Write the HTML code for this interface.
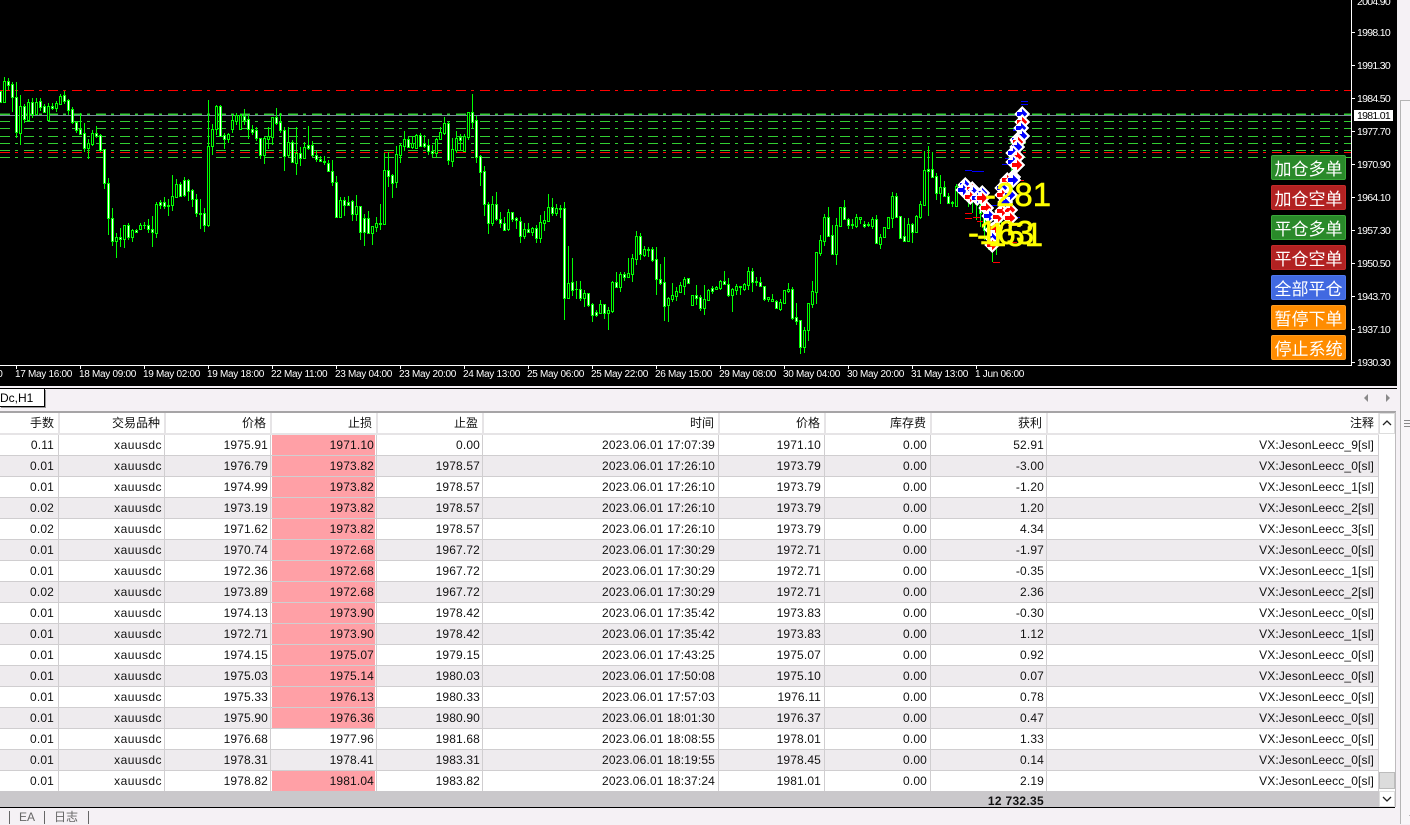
<!DOCTYPE html>
<html><head><meta charset="utf-8"><title>MT4</title>
<style>
*{box-sizing:border-box}
html,body{margin:0;padding:0;background:#f5f1f5;width:1410px;height:824px;overflow:hidden;font-family:"Liberation Sans","Noto Sans CJK SC",sans-serif}
#chart{position:absolute;left:0;top:0;width:1397px;height:386px;background:#000;overflow:hidden}
#chart svg{position:absolute;left:0;top:0}
.p{position:absolute;left:1357px;color:#fff;font-size:10.5px;letter-spacing:-.7px;line-height:12px;height:12px}
.t{position:absolute;top:369px;color:#fff;font-size:10px;letter-spacing:-.3px;line-height:12px;white-space:nowrap}
.cur{position:absolute;left:1354px;top:110px;width:39px;height:11px;background:#fff;color:#000;font-size:10.5px;letter-spacing:-.7px;line-height:13px;padding-left:3px;overflow:hidden}
.y{position:absolute;color:#ff0;font-size:33px;line-height:32px;white-space:nowrap;-webkit-text-stroke:.5px #ff0}
.b{position:absolute;left:1271px;width:75px;height:25px;border-radius:2px;color:#fff;font:17px/24px "WenQuanYi Zen Hei","Noto Sans CJK SC",sans-serif;text-align:center;border:1px solid}
.g{background:#2a8a2a;border-color:#3aa83a}.r{background:#b22222;border-color:#c22a2a}.u{background:#4169e1;border-color:#4f78ee}.o{background:#ff8c00;border-color:#ff9d20}
#tabs{position:absolute;left:0;top:388px;width:1397px;height:24px;background:#f5f1f5;border-top:1px solid #000}
#tab{position:absolute;left:0;top:0;width:45px;height:18px;background:#fff;border-right:1px solid #000;border-bottom:1px solid #000;font-size:12px;line-height:19px;color:#000;box-shadow:1px 1px 0 #999}
#tl{position:absolute;left:0;top:411px;width:1396px;height:2px;background:#a6a4a6}
.row{position:absolute;left:0;width:1379px;height:21px;display:flex;border-bottom:1px solid #d0ced0;background:#fff;font-size:12px;line-height:20px;color:#111;letter-spacing:.15px}
.row.a{background:#eeebee}
.row div{flex:none;text-align:right;padding-right:4px;border-right:1px solid #d0ced0;white-space:nowrap;overflow:hidden}
.row .c2,.row .c3,.row .c4,.row .c5,.row .c9{padding-right:2px}
.row .c6,.row .c7,.row .c8{padding-right:3px}
.row .s{background:linear-gradient(#ffa0a6,#ffa0a6) 1px 0/103px 100% no-repeat}
.row .x{letter-spacing:.45px}
.c1{width:59px}.c2,.c3,.c4,.c5,.c7,.c8{width:106px}.c6{width:236px}.c9{width:116px}.c10{width:332px}
.hd{position:absolute;left:0;top:413px;width:1379px;height:22px;display:flex;background:#fff;border-bottom:2px solid #e6e4e6;font-size:12px;line-height:21px;color:#111}
.hd div{flex:none;text-align:right;padding-right:4px;border-right:2px solid #e6e4e6;position:relative;left:1px}
#tot{position:absolute;left:0;top:791px;width:1379px;height:16px;background:#cac8cb;overflow:hidden;font-size:12px;font-weight:bold;line-height:20px;color:#111;text-align:right;padding-right:335px;letter-spacing:.3px}
#bl{position:absolute;left:0;top:807px;width:1395px;height:1px;background:#000}
.sep{position:absolute;top:811px;width:1px;height:13px;background:#666}
.ft{position:absolute;top:810px;color:#666;font-size:12px;line-height:15px}
#sb{position:absolute;left:1379px;top:413px;width:16px;height:394px;background:#fff}
#sbr{position:absolute;left:1395px;top:412px;width:1px;height:395px;background:#bdbbbd}
#th{position:absolute;left:1379px;top:772px;width:16px;height:17px;background:#dcdcdc;border:1px solid #bcbcbc}
#ub,#db{position:absolute;left:1379px;width:16px;background:#fff;border:1px solid #ddd}
#ub{top:413px;height:21px}#db{top:791px;height:16px}
#right{position:absolute;left:1397px;top:0;width:13px;height:824px;background:#f5f1f5}
#rp{position:absolute;left:3px;top:100px;width:10px;height:724px;border-left:1px solid #b5b5b5;border-top:1px solid #b5b5b5;background:#f8f6f8}
</style></head><body>
<div id="chart">
<svg id="s" width="1397" height="386" viewBox="0 0 1397 386" xmlns="http://www.w3.org/2000/svg">
<defs>
<g id="mb" shape-rendering="crispEdges"><path d="M0-8 8 0 0 8-8 0Z" fill="#fff"/><path d="M-5-2H0V-5L5 0 0 5V2H-5Z" fill="#00f"/></g>
<g id="mr" shape-rendering="crispEdges"><path d="M0-8 8 0 0 8-8 0Z" fill="#fff"/><path d="M-5-2H0V-5L5 0 0 5V2H-5Z" fill="#f00"/></g>
</defs>
<g shape-rendering="crispEdges" stroke-dasharray="10 5 3 6" fill="none">
<path d="M0 90.5H1351M0 152.5H1351" stroke="#f00"/>
<path d="M0 121.5H1351M0 128.5H1351M0 136.5H1351M0 143.5H1351M0 150.5H1351M0 157.5H1351" stroke="#32cd32"/>
<path d="M0 114.5H1351" stroke="#32cd32" stroke-width="2"/>
</g>
<path d="M0 115.5H1351" stroke="#778899" shape-rendering="crispEdges"/>
<g id="cd" shape-rendering="crispEdges"></g>
<g shape-rendering="crispEdges" fill="#00f">
<rect x="1021" y="101" width="7" height="1"/><rect x="1021" y="104" width="7" height="1"/><rect x="1013" y="129" width="6" height="2"/><rect x="1002" y="164" width="6" height="1"/><rect x="1005" y="158" width="5" height="1"/><rect x="965" y="170" width="7" height="1"/><rect x="972" y="171" width="5" height="1"/><rect x="977" y="171" width="7" height="1"/><rect x="989" y="205" width="8" height="1"/><rect x="1014" y="217" width="6" height="1"/>
</g>
<g shape-rendering="crispEdges" fill="#f00">
<rect x="965" y="213" width="7" height="1"/><rect x="965" y="218" width="7" height="1"/><rect x="973" y="217" width="7" height="1"/><rect x="977" y="221" width="6" height="1"/><rect x="1017" y="180" width="7" height="1"/><rect x="993" y="262" width="7" height="1"/><rect x="1008" y="225" width="9" height="1"/><rect x="1008" y="232" width="9" height="1"/><rect x="1008" y="242" width="9" height="1"/>
</g>
<g id="mk"></g>
<path d="M1351.5 0V365.5H0" fill="none" stroke="#fff" shape-rendering="crispEdges"/>
<path d="M1352 32.5h3M1352 65.5h3M1352 98.5h3M1352 131.5h3M1352 164.5h3M1352 197.5h3M1352 230.5h3M1352 263.5h3M1352 296.5h3M1352 329.5h3M1352 362.5h3M16.5 366v3M80.5 366v3M144.5 366v3M208.5 366v3M272.5 366v3M336.5 366v3M400.5 366v3M464.5 366v3M528.5 366v3M592.5 366v3M656.5 366v3M720.5 366v3M784.5 366v3M848.5 366v3M912.5 366v3M976.5 366v3" stroke="#fff" shape-rendering="crispEdges" fill="none"/>
</svg>
<div class="y" style="left:985px;top:179px">-281</div>
<div class="y" style="left:968px;top:217px">-163</div>
<div class="y" style="left:977px;top:219px">-151</div>
<div class="p" style="top:-4px">2004.90</div>
<div class="p" style="top:27px">1998.10</div>
<div class="p" style="top:60px">1991.30</div>
<div class="p" style="top:93px">1984.50</div>
<div class="p" style="top:126px">1977.70</div>
<div class="p" style="top:159px">1970.90</div>
<div class="p" style="top:192px">1964.10</div>
<div class="p" style="top:225px">1957.30</div>
<div class="p" style="top:258px">1950.50</div>
<div class="p" style="top:291px">1943.70</div>
<div class="p" style="top:324px">1937.10</div>
<div class="p" style="top:357px">1930.30</div>
<div class="cur">1981.01</div>
<div class="t" style="left:-8px">00</div>
<div class="t" style="left:15px">17 May 16:00</div>
<div class="t" style="left:79px">18 May 09:00</div>
<div class="t" style="left:143px">19 May 02:00</div>
<div class="t" style="left:207px">19 May 18:00</div>
<div class="t" style="left:271px">22 May 11:00</div>
<div class="t" style="left:335px">23 May 04:00</div>
<div class="t" style="left:399px">23 May 20:00</div>
<div class="t" style="left:463px">24 May 13:00</div>
<div class="t" style="left:527px">25 May 06:00</div>
<div class="t" style="left:591px">25 May 22:00</div>
<div class="t" style="left:655px">26 May 15:00</div>
<div class="t" style="left:719px">29 May 08:00</div>
<div class="t" style="left:783px">30 May 04:00</div>
<div class="t" style="left:847px">30 May 20:00</div>
<div class="t" style="left:911px">31 May 13:00</div>
<div class="t" style="left:975px">1 Jun 06:00</div>
<div class="b g" style="top:155px">加仓多单</div>
<div class="b r" style="top:185px">加仓空单</div>
<div class="b g" style="top:215px">平仓多单</div>
<div class="b r" style="top:245px">平仓空单</div>
<div class="b u" style="top:275px">全部平仓</div>
<div class="b o" style="top:305px">暂停下单</div>
<div class="b o" style="top:335px">停止系统</div>
</div>

<div id="tabs"><div id="tab">Dc,H1</div>
<svg style="position:absolute;left:1360px;top:3px" width="32" height="12"><path d="M8 2v8L4 6ZM26 2v8l4-4Z" fill="#8a8a8a"/></svg></div>
<div id="tl"></div>

<div class="hd"><div class="c1">手数</div><div class="c2">交易品种</div><div class="c3">价格</div><div class="c4">止损</div><div class="c5">止盈</div><div class="c6">时间</div><div class="c7">价格</div><div class="c8">库存费</div><div class="c9">获利</div><div class="c10">注释</div></div>

<div class="row" style="top:435px"><div class="c1">0.11</div><div class="c2 x">xauusdc</div><div class="c3">1975.91</div><div class="c4 s">1971.10</div><div class="c5">0.00</div><div class="c6">2023.06.01 17:07:39</div><div class="c7">1971.10</div><div class="c8">0.00</div><div class="c9">52.91</div><div class="c10">VX:JesonLeecc_9[sl]</div></div>
<div class="row a" style="top:456px"><div class="c1">0.01</div><div class="c2 x">xauusdc</div><div class="c3">1976.79</div><div class="c4 s">1973.82</div><div class="c5">1978.57</div><div class="c6">2023.06.01 17:26:10</div><div class="c7">1973.79</div><div class="c8">0.00</div><div class="c9">-3.00</div><div class="c10">VX:JesonLeecc_0[sl]</div></div>
<div class="row" style="top:477px"><div class="c1">0.01</div><div class="c2 x">xauusdc</div><div class="c3">1974.99</div><div class="c4 s">1973.82</div><div class="c5">1978.57</div><div class="c6">2023.06.01 17:26:10</div><div class="c7">1973.79</div><div class="c8">0.00</div><div class="c9">-1.20</div><div class="c10">VX:JesonLeecc_1[sl]</div></div>
<div class="row a" style="top:498px"><div class="c1">0.02</div><div class="c2 x">xauusdc</div><div class="c3">1973.19</div><div class="c4 s">1973.82</div><div class="c5">1978.57</div><div class="c6">2023.06.01 17:26:10</div><div class="c7">1973.79</div><div class="c8">0.00</div><div class="c9">1.20</div><div class="c10">VX:JesonLeecc_2[sl]</div></div>
<div class="row" style="top:519px"><div class="c1">0.02</div><div class="c2 x">xauusdc</div><div class="c3">1971.62</div><div class="c4 s">1973.82</div><div class="c5">1978.57</div><div class="c6">2023.06.01 17:26:10</div><div class="c7">1973.79</div><div class="c8">0.00</div><div class="c9">4.34</div><div class="c10">VX:JesonLeecc_3[sl]</div></div>
<div class="row a" style="top:540px"><div class="c1">0.01</div><div class="c2 x">xauusdc</div><div class="c3">1970.74</div><div class="c4 s">1972.68</div><div class="c5">1967.72</div><div class="c6">2023.06.01 17:30:29</div><div class="c7">1972.71</div><div class="c8">0.00</div><div class="c9">-1.97</div><div class="c10">VX:JesonLeecc_0[sl]</div></div>
<div class="row" style="top:561px"><div class="c1">0.01</div><div class="c2 x">xauusdc</div><div class="c3">1972.36</div><div class="c4 s">1972.68</div><div class="c5">1967.72</div><div class="c6">2023.06.01 17:30:29</div><div class="c7">1972.71</div><div class="c8">0.00</div><div class="c9">-0.35</div><div class="c10">VX:JesonLeecc_1[sl]</div></div>
<div class="row a" style="top:582px"><div class="c1">0.02</div><div class="c2 x">xauusdc</div><div class="c3">1973.89</div><div class="c4 s">1972.68</div><div class="c5">1967.72</div><div class="c6">2023.06.01 17:30:29</div><div class="c7">1972.71</div><div class="c8">0.00</div><div class="c9">2.36</div><div class="c10">VX:JesonLeecc_2[sl]</div></div>
<div class="row" style="top:603px"><div class="c1">0.01</div><div class="c2 x">xauusdc</div><div class="c3">1974.13</div><div class="c4 s">1973.90</div><div class="c5">1978.42</div><div class="c6">2023.06.01 17:35:42</div><div class="c7">1973.83</div><div class="c8">0.00</div><div class="c9">-0.30</div><div class="c10">VX:JesonLeecc_0[sl]</div></div>
<div class="row a" style="top:624px"><div class="c1">0.01</div><div class="c2 x">xauusdc</div><div class="c3">1972.71</div><div class="c4 s">1973.90</div><div class="c5">1978.42</div><div class="c6">2023.06.01 17:35:42</div><div class="c7">1973.83</div><div class="c8">0.00</div><div class="c9">1.12</div><div class="c10">VX:JesonLeecc_1[sl]</div></div>
<div class="row" style="top:645px"><div class="c1">0.01</div><div class="c2 x">xauusdc</div><div class="c3">1974.15</div><div class="c4 s">1975.07</div><div class="c5">1979.15</div><div class="c6">2023.06.01 17:43:25</div><div class="c7">1975.07</div><div class="c8">0.00</div><div class="c9">0.92</div><div class="c10">VX:JesonLeecc_0[sl]</div></div>
<div class="row a" style="top:666px"><div class="c1">0.01</div><div class="c2 x">xauusdc</div><div class="c3">1975.03</div><div class="c4 s">1975.14</div><div class="c5">1980.03</div><div class="c6">2023.06.01 17:50:08</div><div class="c7">1975.10</div><div class="c8">0.00</div><div class="c9">0.07</div><div class="c10">VX:JesonLeecc_0[sl]</div></div>
<div class="row" style="top:687px"><div class="c1">0.01</div><div class="c2 x">xauusdc</div><div class="c3">1975.33</div><div class="c4 s">1976.13</div><div class="c5">1980.33</div><div class="c6">2023.06.01 17:57:03</div><div class="c7">1976.11</div><div class="c8">0.00</div><div class="c9">0.78</div><div class="c10">VX:JesonLeecc_0[sl]</div></div>
<div class="row a" style="top:708px"><div class="c1">0.01</div><div class="c2 x">xauusdc</div><div class="c3">1975.90</div><div class="c4 s">1976.36</div><div class="c5">1980.90</div><div class="c6">2023.06.01 18:01:30</div><div class="c7">1976.37</div><div class="c8">0.00</div><div class="c9">0.47</div><div class="c10">VX:JesonLeecc_0[sl]</div></div>
<div class="row" style="top:729px"><div class="c1">0.01</div><div class="c2 x">xauusdc</div><div class="c3">1976.68</div><div class="c4">1977.96</div><div class="c5">1981.68</div><div class="c6">2023.06.01 18:08:55</div><div class="c7">1978.01</div><div class="c8">0.00</div><div class="c9">1.33</div><div class="c10">VX:JesonLeecc_0[sl]</div></div>
<div class="row a" style="top:750px"><div class="c1">0.01</div><div class="c2 x">xauusdc</div><div class="c3">1978.31</div><div class="c4">1978.41</div><div class="c5">1983.31</div><div class="c6">2023.06.01 18:19:55</div><div class="c7">1978.45</div><div class="c8">0.00</div><div class="c9">0.14</div><div class="c10">VX:JesonLeecc_0[sl]</div></div>
<div class="row" style="top:771px"><div class="c1">0.01</div><div class="c2 x">xauusdc</div><div class="c3">1978.82</div><div class="c4 s">1981.04</div><div class="c5">1983.82</div><div class="c6">2023.06.01 18:37:24</div><div class="c7">1981.01</div><div class="c8">0.00</div><div class="c9">2.19</div><div class="c10">VX:JesonLeecc_0[sl]</div></div>

<div id="tot">12 732.35</div>
<div id="bl"></div>
<div id="sb"></div><div id="sbr"></div><div id="th"></div>
<div id="ub"><svg width="14" height="19"><path d="M3 11l4-4 4 4" fill="none" stroke="#222" stroke-width="1.3"/></svg></div>
<div id="db"><svg width="14" height="14"><path d="M3 5l4 4 4-4" fill="none" stroke="#222" stroke-width="1.3"/></svg></div>
<div class="sep" style="left:9px"></div><div class="ft" style="left:19px">EA</div><div class="sep" style="left:44px"></div><div class="ft" style="left:54px">日志</div><div class="sep" style="left:88px"></div>
<div id="right"><div id="rp">
<svg width="9" height="720" style="position:absolute;left:3px;top:0"><path d="M0 319.5h9M0 322.5h9M0 325.5h9" stroke="#888" shape-rendering="crispEdges"/><path d="M5 714h6l-3 3Z" fill="#777"/></svg>
</div></div>

<script>
var seg=[[0,70,"w62,62,95,95 g22,34,96,99 w25,34,44,60 w36,42,80,126 w37,82,185,204 g75,108,188,225 w102,108,146,158 g88,97,150,155 w85,97,132,145 g85,95,132,135 w85,94,110,123 w103,108,125,130 g98,108,150,150 w98,108,115,120 g92,98,114,125 g72,78,102,103 w62,76,93,102 w86,90,120,135 w110,118,155,162 w152,155,180,190 w128,178,192,195 w160,190,233,245 g208,220,233,267 g180,190,222,228 w168,190,198,205 w193,196,240,246 w236,238,340,357 w324,340,445,495 w414,445,512,528 g490,502,512,564 w475,502,508,530 g466,466,508,534 w460,466,500,510 g476,481,500,516 w477,480,485,488 g458,465,476,477 g456,464,466,477 w447,466,478,488 w438,478,485,530 g396,403,488,504 w390,396,404,416 w381,397,407,416 g386,405,407,438 g316,378,406,422 g327,343,380,384 w336,343,378,382 w321,331,376,380 w326,330,362,393 w356,360,388,410 w372,388,430,442 g388,430,432,476 w415,430,464,486 g90,229,465,472 g162,176,228,255 g105,108,178,195 w105,108,197,200 w190,196,208,236 g188,193,208,218 g133,150,177,190 g128,136,152,165 g133,135,176,176 w118,138,150,165 w135,148,178,207 w165,178,185,195 w170,180,205,212 w203,205,255,267 g200,205,255,282 g172,198,207,237 g141,142,200,225 w114,142,158,165 w130,156,180,190 w170,180,257,303 g172,217,255,262 w210,217,276,280 g172,250,278,315 w232,250,263,288 g217,232,263,263 w168,226,233,240 w214,226,256,262 w243,254,268,276"],
[320,80,"w228,236,243,246 w229,243,247,255 w240,249,272,275 w240,272,307,318 w289,307,410,411 g352,361,410,411 w352,361,375,408 w348,366,375,378 w360,364,401,423 g345,379,402,423 w378,379,455,480 w403,415,456,498 w393,415,459,462 g437,439,458,495 g411,430,440,456 g372,429,431,450 g220,271,431,431 w216,271,287,321 w282,286,308,354 g198,223,307,324 g190,196,224,248 g153,178,197,212 w170,178,200,205 g168,190,200,208 g163,166,203,205 w160,166,197,200 w165,190,197,205 w178,194,212,225 w195,212,220,233 g175,176,220,233 g140,156,177,180 g110,130,158,165 w124,130,241,255 g175,208,242,261 g153,175,210,218 w163,172,180,212 g163,168,212,212 g95,95,170,180 w42,95,125,145 w108,121,230,248 w225,229,275,318 w258,274,371,408 w365,371,429,462 g348,373,429,438 w336,373,416,422 w396,416,428,444 w411,428,451,453 g388,397,446,453 w395,397,416,425 w410,415,421,448 w411,424,468,489 g430,448,468,477 w430,448,456,458 g440,445,456,468 w435,445,473,489 g405,427,473,489 g393,421,428,454 g342,382,423,425 w354,382,398,407 g372,385,400,407 g376,385,387,414 w366,385,653,720 g498,610,653,657 w534,607,630,648 g603,626,628,657 w603,626,653,663 g630,640,653,680 w638,640,674,681 w668,673,704,726 w690,697,705,711 g660,673,700,701 w672,673,698,717 g682,691,698,750 g603,606,692,700 w576,607,621,622 g577,583,620,636 w577,583,590,603 g534,580,590,592 g522,534,581,606 g453,469,536,555"],
[640,140,"w280,289,342,360 g318,327,344,352 g321,327,329,352 w322,327,359,365 w322,358,418,465 w373,418,428,435 w352,427,497,543 g470,474,495,546 g430,466,476,485 g440,452,468,483 g425,435,456,460 g412,417,437,465 w415,415,429,431 g466,466,495,498 w434,466,473,495 w466,472,503,512 g435,477,504,526 g448,450,480,480 w438,445,452,462 g438,442,446,450 g420,424,443,450 w393,424,431,435 w415,431,466,470 g445,447,465,516 g433,438,450,465 g437,438,441,465 g428,432,448,452 g381,394,434,450 w385,394,427,455 g411,424,426,437 w412,425,439,440 w438,439,476,483 g472,472,476,486 g462,477,483,487 w479,482,503,506 g478,486,507,513 g450,451,488,488 g430,448,454,458 w441,448,534,540 w490,532,542,556 w541,541,622,641 g561,571,622,640 g488,490,569,603 g423,454,491,505 g336,337,456,491 g285,301,338,347 g223,232,302,318 w202,232,288,290 w256,286,342,345 g235,256,342,375 g201,202,258,258 w180,202,237,240 w235,238,254,268 g238,252,256,268 g223,232,257,263 g231,231,236,252 w243,251,258,263 g246,252,256,260 g232,237,258,268 w225,238,309,311 g281,290,311,327 g261,262,292,295 g232,232,264,264 g156,169,233,264 w158,169,231,233 w229,229,293,295 w233,289,303,305 g233,253,303,306 w248,253,276,309 g225,229,276,280 g183,193,231,238 g33,91,194,195 w18,88,92,228 w36,88,110,112 w100,109,158,180 g106,142,158,192 w122,142,168,172 w160,167,190,193 g182,186,190,200 g132,139,197,200"],
[960,0,"w549,552,573,585 g555,560,570,600 w560,565,585,620 w570,575,600,640 w590,595,612,660 w610,615,640,680 w630,640,690,720 w670,680,735,750 w700,720,750,786 g660,675,735,765 g615,630,675,690 g540,555,630,660 g525,535,600,630 g450,465,540,570 g405,420,465,480 g345,360,405,435 g330,336,390,429"]];
var gr="",wh="",bk="";
function R(x,y,w,h){return "M"+x+" "+y+"h"+w+"v"+h+"h"+(-w)+"Z"}
seg.forEach(function(s){
 var c=s[0],y0=s[1];
 s[2].split(" ").forEach(function(d){
  var t=d[0],n=d.slice(1).split(",").map(function(v){return Math.round(y0+v/3)});
  var h=n[0],a=n[1],b=n[2],l=n[3];
  gr+=R(c,h,1,Math.max(l-h,1));
  gr+=R(c-1,a,3,Math.max(b-a+1,1));
  if(b-a>=2){if(t=="w")wh+=R(c,a+1,1,b-a-1);else{bk+=R(c,a+1,1,b-a-1)}}
  c+=4;
 });
});
document.getElementById("cd").innerHTML='<path d="'+gr+'" fill="#00ff00"/><path d="'+bk+'" fill="#000"/><path d="'+wh+'" fill="#fff"/>';
var mk="1022,114,b 1022,122,r 1021,128,b 1022,136,b 1017,140,b 1018,142,r 1017,147,b 1013,153,b 1017,157,r 1013,162,b 1017,165,r 1013,177,b 1003,187,b 1007,182,r 965,185,b 963,190,b 972,189,r 973,192,b 970,197,r 982,193,b 977,198,b 982,198,r 986,208,r 989,216,b 992,230,b 992,238,b 992,245,r 995,228,r 998,217,r 1002,211,r 1010,210,r 1010,218,r 1002,188,b 1002,195,r 1005,202,b 1010,195,b 1007,180,r 1013,180,b".split(" ");
var m="";mk.forEach(function(e){var p=e.split(",");m+='<use href="#m'+p[2]+'" x="'+p[0]+'" y="'+p[1]+'"/>'});
document.getElementById("mk").innerHTML=m;
</script>
</body></html>
